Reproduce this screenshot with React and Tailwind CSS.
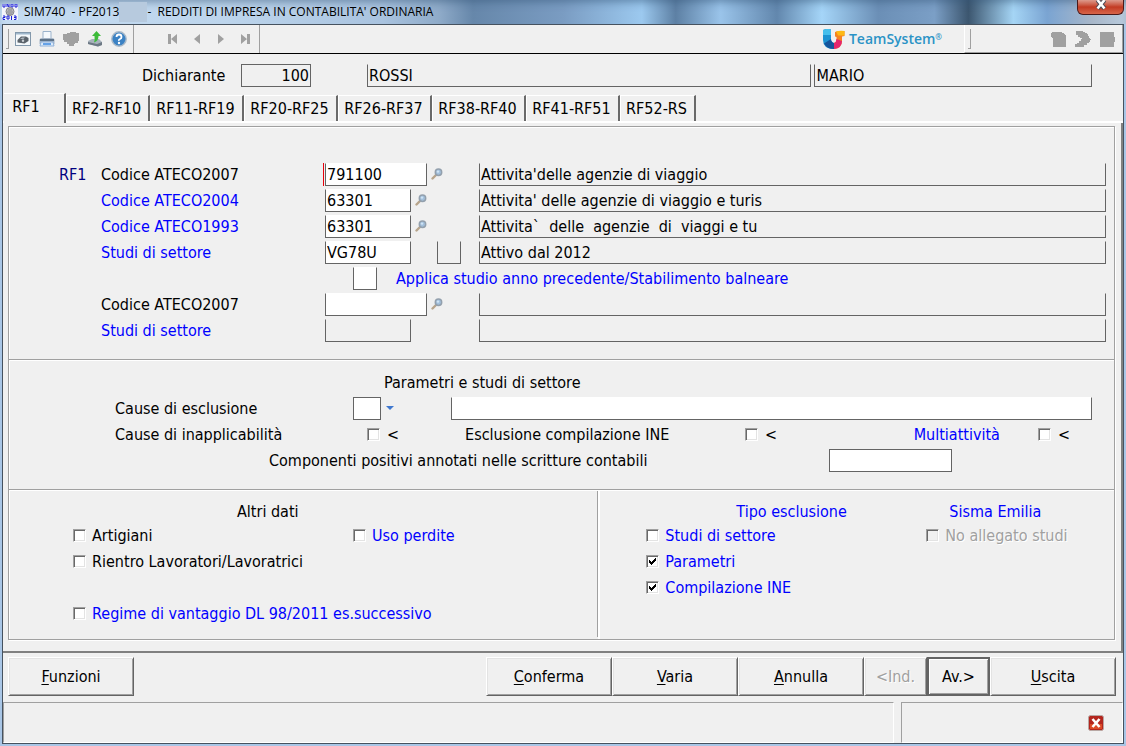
import { useState } from 'react';
import clsx from 'clsx';

const tabs = [
  { label: 'RF1', width: 'w-[62px]' },
  { label: 'RF2-RF10', width: 'w-[84px]' },
  { label: 'RF11-RF19', width: 'w-[94px]' },
  { label: 'RF20-RF25', width: 'w-[94px]' },
  { label: 'RF26-RF37', width: 'w-[94px]' },
  { label: 'RF38-RF40', width: 'w-[94px]' },
  { label: 'RF41-RF51', width: 'w-[94px]' },
  { label: 'RF52-RS', width: 'w-[76px]' },
];

const activityRows = [
  { id: 'ateco2007', label: 'Codice ATECO2007', code: '791100', wide: true, lookup: true, required: true, text: "Attivita'delle agenzie di viaggio" },
  { id: 'ateco2004', label: 'Codice ATECO2004', blue: true, code: '63301', lookup: true, text: "Attivita' delle agenzie di viaggio e turis" },
  { id: 'ateco1993', label: 'Codice ATECO1993', blue: true, code: '63301', lookup: true, text: 'Attivita`  delle  agenzie  di  viaggi e tu' },
  { id: 'studi', label: 'Studi di settore', blue: true, code: 'VG78U', extra: true, text: 'Attivo dal 2012' },
];

const secondActivityRows = [
  { id: 'ateco2007b', label: 'Codice ATECO2007', code: '', wide: true, lookup: true, text: '' },
  { id: 'studib', label: 'Studi di settore', blue: true, code: '', locked: true, text: '' },
];

const Field = ({ className, locked, boxed, ...props }) => (
  <input
    type="text"
    className={clsx(
      'h-[23px] min-w-0 border border-[#646464] px-px text-base leading-5 text-black outline-none',
      !boxed && 'border-t-transparent',
      locked ? 'bg-[#f0f0f0]' : 'bg-white',
      className
    )}
    readOnly={locked}
    {...props}
  />
);

const CheckBox = ({ disabled, ...props }) => (
  <span className="relative block h-[13px] w-[13px] shrink-0">
    <input
      type="checkbox"
      disabled={disabled}
      className={clsx(
        'peer block h-[13px] w-[13px] appearance-none border border-t-[#a0a0a0] border-r-white border-b-white border-l-[#a0a0a0] shadow-[inset_1px_1px_0_#696969,inset_-1px_-1px_0_#e3e3e3]',
        disabled ? 'bg-[#f0f0f0]' : 'bg-white'
      )}
      {...props}
    />
    <svg
      viewBox="0 0 13 13"
      className="pointer-events-none absolute inset-0 hidden peer-checked:block"
      shapeRendering="crispEdges"
      aria-hidden="true"
    >
      <path d="M3 5h1v1h1v1h1v-1h1v-1h1v-1h1v-1h1v3h-1v1h-1v1h-1v1h-1v1h-1v-1h-1v-1h-1z" fill="#000" />
    </svg>
  </span>
);

const LabeledCheck = ({ label, blue, disabled, className, ...props }) => (
  <label
    className={clsx(
      'flex h-[26px] items-center gap-1.5 whitespace-nowrap',
      blue && 'text-[#0000ff]',
      disabled && 'text-[#a0a0a0] [text-shadow:1px_1px_0_#fff]',
      className
    )}
  >
    <CheckBox disabled={disabled} {...props} />
    {label}
  </label>
);

const LookupButton = () => (
  <button type="button" className="ml-0.5 flex h-4 w-4 items-center justify-center" aria-label="Cerca">
    <svg viewBox="0 0 12 12" className="h-3 w-3" aria-hidden="true">
      <path d="M1.500 10.500l3.500-3.500" stroke="#b8a58c" strokeWidth="2.400" strokeLinecap="round" />
      <circle cx="7.500" cy="4.300" r="3.200" fill="#a3c0dc" stroke="#93a0ad" strokeWidth="1.500" />
      <circle cx="7" cy="3.600" r="1.200" fill="#cfe4f5" />
    </svg>
  </button>
);

const ActivityRow = ({ row, section }) => (
  <div className="flex h-[26px] items-center">
    <span className="w-[42px] shrink-0 text-[#000080]">{section}</span>
    <label htmlFor={row.id} className={clsx('w-[222px] shrink-0 whitespace-nowrap', row.blue && 'text-[#0000ff]')}>
      {row.label}
    </label>
    <div className={clsx('flex w-[156px] shrink-0 items-center border-l pl-px', row.required ? 'border-red-600' : 'border-transparent')}>
      <Field id={row.id} defaultValue={row.code} locked={row.locked} className={row.wide ? 'w-[102px]' : 'w-[86px]'} />
      {row.lookup ? <LookupButton /> : null}
      {row.extra ? <Field locked aria-label="Tipo studio" className="mr-[18px] ml-auto w-6" /> : null}
    </div>
    <Field locked defaultValue={row.text} aria-label={`Descrizione ${row.label}`} className="flex-1" />
  </div>
);

const InlineCheck = ({ id, ...props }) => (
  <div className="flex items-center gap-[7px]">
    <CheckBox id={id} {...props} />
    <span>&lt;</span>
  </div>
);

const ActionButton = ({ children, hotkey, className, focused, ...props }) => (
  <button
    type="button"
    className={clsx(
      'h-[39px] border text-base',
      focused
        ? 'border-2 border-[#646464] shadow-[inset_1px_1px_0_#fff,inset_-1px_-1px_0_#a0a0a0]'
        : 'border-t-white border-r-[#646464] border-b-[#646464] border-l-white shadow-[inset_1px_1px_0_#e3e3e3,inset_-1px_-1px_0_#a0a0a0]',
      'disabled:text-[#a0a0a0] disabled:[text-shadow:1px_1px_0_#fff]',
      className
    )}
    {...props}
  >
    {hotkey ? <span className="underline underline-offset-2">{hotkey}</span> : null}
    {children}
  </button>
);

const ToolButton = ({ label, children }) => (
  <button type="button" className="flex h-6 w-6 items-center justify-center" aria-label={label}>
    <svg viewBox="0 0 16 16" className="h-4 w-4" aria-hidden="true">
      {children}
    </svg>
  </button>
);

const TitleBar = () => (
  <header className="flex h-6 items-center bg-[linear-gradient(90deg,#c5dcf2_0%,#bdd5ec_20%,#a9c3df_34%,#8fabc9_39%,#6687aa_42%,#7a9cc2_50%,#9cc9ef_57%,#5d80a4_60%,#9ac4ea_64%,#6287ad_69%,#a5d5f8_73%,#6b8fb6_78%,#7b9fc6_83%,#3c566f_86%,#a5d5f5_90%,#7aa4d2_93%,#a8b7c9_97%,#b9cbdd_100%)] pl-[2px] shadow-[inset_0_6px_8px_-4px_#33557788]">
    <svg viewBox="0 0 16 16" className="h-4 w-4 shrink-0" aria-hidden="true">
      <rect width="16" height="16" fill="#f4f4fb" />
      <path d="M1 0v3h2V0M5 3V0l2 3V0M9 0v3h2V0zM13 0h2v3h-2z" stroke="#1a20d8" fill="none" />
      <circle cx="8" cy="7.500" r="4" fill="#b9b9bd" stroke="#85858c" />
      <path d="M6 6h4M5 8h6M6 10h4" stroke="#8b8b92" />
      <path d="M1 12h2v1.500H1V15.500h2M5 12h2v3H5zM9.500 12v4M12 12h2v3.500h-2M12 13.500h2" stroke="#1a20d8" fill="none" />
    </svg>
    <h1 className="flex flex-1 items-center pl-1.5 font-['Open_Sans',sans-serif] text-xs whitespace-pre text-black">
      SIM740&nbsp; - PF2013
      <span className="h-5 w-7 bg-[#b7cade]" />
      -&nbsp; REDDITI DI IMPRESA IN CONTABILITA' ORDINARIA
    </h1>
    <button
      type="button"
      className="mr-0.5 flex h-[15px] w-[47px] items-start justify-center self-start rounded-b-md border border-t-0 border-[#4b1a1a] bg-linear-to-b from-[#dc9a8c] via-[#c23a22] to-[#d7654a]"
      aria-label="Chiudi"
    >
      <svg viewBox="0 0 12 10" className="h-2.5 w-3" aria-hidden="true">
        <path d="M2.500 0l7 8.500M9.500 0l-7 8.500" stroke="#4a4a55" strokeWidth="4.400" />
        <path d="M2.500 0l7 8.500M9.500 0l-7 8.500" stroke="#fff" strokeWidth="2.600" />
      </svg>
    </button>
  </header>
);

const Grip = () => <span className="h-5 w-[3px] border-r border-b border-[#a0a0a0]" />;

const Brand = () => (
  <div className="flex items-center gap-1">
    <svg viewBox="0 0 22 20" className="h-5 w-[22px]" aria-hidden="true">
      <path d="M0 1q4-2 8-.5V10q0 3 3 4v6Q0 20 0 11z" fill="#1c93d2" />
      <path d="M0 1q4-2 8-.5V6H0z" fill="#45bfec" />
      <path d="M1 14.500L8 10q0 3 3 4v6q-7 0-10-5.500z" fill="#15559c" />
      <path d="M12 3q3-1 9.500-1v5l-2.500.5V12q0 7-8 8v-6q2.500-1 2.500-4V8L12 7.500z" fill="#f5821f" />
      <path d="M13 2.500q3-1 8.500-.5v4.500H15z" fill="#fdb913" />
      <path d="M13.500 10L19 12q0 7-8 8v-6q2.500-1 2.500-4z" fill="#e5266e" />
    </svg>
    <span className="font-['Open_Sans',sans-serif] text-sm font-semibold text-[#2b93c6]">
      TeamSystem<sup className="text-[8px]">®</sup>
    </span>
  </div>
);

const Toolbar = () => (
  <div className="flex h-[29px] items-stretch border-b border-black">
    <div className="flex items-center border-r border-[#a0a0a0] pl-[3px]">
      <Grip />
      <div className="flex h-full items-center border-r border-[#a0a0a0] pr-0.5 pl-0.5">
        <ToolButton label="Anteprima">
          <rect x="0.500" y="1.500" width="15" height="13" fill="#f4f8fb" stroke="#8398ab" />
          <path d="M1 2h14v1.500H1z" fill="#9fb7cb" />
          <path d="M2.500 9l3.500-3.500h5L13.500 7v3l-4 2.500-7-1z" fill="#5b636b" />
          <path d="M5 8l2-1.500h3L8.500 8z" fill="#aeb6bd" />
          <circle cx="8" cy="9.800" r="1.200" fill="#c9ced3" />
        </ToolButton>
        <ToolButton label="Stampa">
          <path d="M4 .5h8V8H4z" fill="#f5f9fd" stroke="#9bb3cc" />
          <path d="M.5 9q0-2 3-2h9q3 0 3 2v4H.5z" fill="#a4b4c6" />
          <path d="M1 8h14v2H1z" fill="#5e7389" />
          <path d="M2 11h12l1 4H1z" fill="#dcebfa" stroke="#8fb0d8" />
          <path d="M4 13h8" stroke="#3f8ae0" strokeWidth="1.500" />
        </ToolButton>
        <ToolButton label="Esporta">
          <path d="M0 3h4V2h3V1h6v1h3v8h-1v2h-3v1h-1v2H6v-2H4v-2H1V9H0z" fill="#a0a0a0" />
        </ToolButton>
        <ToolButton label="Scarica">
          <path d="M1 10l4-2h7l3 3v3l-4 1.500L1 13z" fill="#a8b2bc" />
          <path d="M1 11l9 2 5-2v3l-4 1.500L1 13z" fill="#6c7884" />
          <path d="M9.500 0L14 5h-2.500q0 5-4.500 6.500Q8 9 7.500 5H5z" fill="#3dbb3a" />
        </ToolButton>
        <ToolButton label="Aiuto">
          <circle cx="8" cy="8" r="7.200" fill="#3b82c4" stroke="#a9b9c8" strokeWidth="1.400" />
          <path d="M5.500 6q0-2.500 2.500-2.500T10.500 6q0 1.300-1.500 2T8 9.800" stroke="#fff" strokeWidth="1.800" fill="none" />
          <circle cx="8" cy="12" r="1.200" fill="#fff" />
        </ToolButton>
      </div>
      <div className="flex items-center pr-0.5 pl-[27px]">
        <ToolButton label="Primo">
          <path d="M3 3h3v10H3zM12 3v10L6 8z" fill="#a0a0a0" />
        </ToolButton>
        <ToolButton label="Precedente">
          <path d="M11 3v10L5 8z" fill="#a0a0a0" />
        </ToolButton>
        <ToolButton label="Successivo">
          <path d="M5 3v10l6-5z" fill="#a0a0a0" />
        </ToolButton>
        <ToolButton label="Ultimo">
          <path d="M10 3h3v10h-3zM4 3v10l6-5z" fill="#a0a0a0" />
        </ToolButton>
      </div>
    </div>
    <div className="mr-[22px] ml-auto flex items-center">
      <Brand />
    </div>
    <div className="flex items-center border-r border-b border-l border-r-[#a0a0a0] border-b-[#a0a0a0] border-l-white pr-[3px] pl-[3px]">
      <Grip />
      <div className="flex pl-[76px]">
        <ToolButton label="Documento">
          <path d="M1 1h10v1h2v1h1v1h1v12H2V7H1V6H0V2h1z" fill="#a0a0a0" />
        </ToolButton>
        <ToolButton label="Avanza">
          <path d="M1 0h7v1h2v1h2v1h1v2h1v2h1v1h1v1h-1v2h-1v1h-2v2H9v2H0v-3h2v-1h2v-2h2V8h1V7H5V6H3V4H1z" fill="#a0a0a0" />
        </ToolButton>
        <ToolButton label="Modulo">
          <path d="M1 1h14v5h1v5h-1v5H1z" fill="#a0a0a0" />
        </ToolButton>
      </div>
    </div>
  </div>
);

export default function App() {
  const [activeTab, setActiveTab] = useState('RF1');

  return (
    <div className="flex min-h-screen flex-col bg-[#a9c6e6] font-['DejaVu_Sans_Condensed','DejaVu_Sans',sans-serif] text-base leading-[21px] text-black">
      <TitleBar />
      <div className="mx-0.5 mb-0.5 flex flex-1 flex-col border border-[#46525f] bg-[#f0f0f0]">
        <Toolbar />

        <div className="flex h-[39px] items-center pt-1 pr-[31px] pl-[139px]">
          <label htmlFor="dichiarante" className="w-[99px] shrink-0">
            Dichiarante
          </label>
          <Field id="dichiarante" boxed locked defaultValue="100" className="w-[70px] text-right" />
          <Field locked defaultValue="ROSSI" aria-label="Cognome" className="ml-14 flex-[446]" />
          <Field locked defaultValue="MARIO" aria-label="Nome" className="ml-[3px] flex-[277]" />
        </div>

        <div role="tablist" className="flex items-end border-b-2 border-white pl-px">
          {tabs.map((tab) => (
            <button
              key={tab.label}
              type="button"
              role="tab"
              aria-selected={activeTab === tab.label}
              onClick={() => setActiveTab(tab.label)}
              className={clsx(
                'shrink-0 border-t border-r-2 border-t-white border-r-[#696969] text-base whitespace-nowrap',
                activeTab === tab.label ? '-mb-0.5 h-[30px] bg-[#f0f0f0] pr-4 pb-1' : 'h-[26px] border-l border-l-white pr-0.5',
                tab.width
              )}
            >
              {tab.label}
            </button>
          ))}
        </div>

        <main className="flex flex-1 flex-col border-r-2 border-b-2 border-[#808080] pt-[3px] pr-1.5 pb-[11px] pl-[5px]">
          <div className="flex flex-1 flex-col border border-[#a0a0a0] shadow-[inset_1px_1px_0_#fff,1px_1px_0_#fff]">
            <section className="border-b border-[#a0a0a0] pt-[34px] pr-2 pb-4 pl-[50px]">
              {activityRows.map((row, index) => (
                <ActivityRow key={row.id} row={row} section={index === 0 ? 'RF1' : ''} />
              ))}
              <div className="flex h-[26px] items-center gap-[19px] pl-[294px]">
                <Field id="applica" className="w-6" />
                <label htmlFor="applica" className="whitespace-nowrap text-[#0000ff]">
                  Applica studio anno precedente/Stabilimento balneare
                </label>
              </div>
              {secondActivityRows.map((row) => (
                <ActivityRow key={row.id} row={row} />
              ))}
            </section>

            <section className="border-t border-b border-t-white border-b-[#a0a0a0] pt-2 pr-[22px] pb-4 pl-[106px]">
              <h2 className="flex h-[26px] items-center pl-[269px]">Parametri e studi di settore</h2>
              <div className="flex h-[26px] items-center">
                <label htmlFor="esclusione" className="w-[238px] shrink-0">
                  Cause di esclusione
                </label>
                <Field id="esclusione" boxed className="w-7" />
                <button type="button" className="mr-[57px] flex h-5 w-[13px] items-center justify-end" aria-label="Apri elenco">
                  <svg viewBox="0 0 8 4" className="h-1 w-2" aria-hidden="true">
                    <path d="M0 0h8L4 4z" fill="#3f78cf" />
                  </svg>
                </button>
                <Field aria-label="Descrizione causa di esclusione" className="flex-1" />
              </div>
              <div className="flex h-[26px] items-center">
                <label htmlFor="inapplicabilita" className="w-[252px] shrink-0">
                  Cause di inapplicabilità
                </label>
                <InlineCheck id="inapplicabilita" />
                <label htmlFor="ine" className="ml-[66px] w-[280px]">
                  Esclusione compilazione INE
                </label>
                <InlineCheck id="ine" />
                <label htmlFor="multi" className="mr-[38px] ml-auto text-[#0000ff]">
                  Multiattività
                </label>
                <InlineCheck id="multi" />
                <span className="w-[22px]" />
              </div>
              <div className="flex h-[26px] items-center pl-[154px]">
                <label htmlFor="componenti" className="w-[560px]">
                  Componenti positivi annotati nelle scritture contabili
                </label>
                <Field id="componenti" boxed className="w-[123px]" />
              </div>
            </section>

            <div className="grid flex-1 grid-cols-[8fr_7fr] border-t border-white">
              <section className="mb-0.5 border-r border-[#a0a0a0] pt-2.5 pb-2.5 pl-16">
                <h2 className="flex h-[21px] items-center pl-[164px]">Altri dati</h2>
                <div className="grid grid-cols-[280px_1fr]">
                  <LabeledCheck label="Artigiani" />
                  <LabeledCheck label="Uso perdite" blue />
                  <LabeledCheck label="Rientro Lavoratori/Lavoratrici" />
                </div>
                <LabeledCheck label="Regime di vantaggio DL 98/2011 es.successivo" blue className="mt-[26px]" />
              </section>
              <section className="grid grid-cols-[280px_1fr] content-start border-l-2 border-white pt-2.5 pl-[46px]">
                <h2 className="flex h-[21px] items-center pl-[90px] text-[#0000ff]">Tipo esclusione</h2>
                <h2 className="flex h-[21px] items-center pl-[23px] text-[#0000ff]">Sisma Emilia</h2>
                <div>
                  <LabeledCheck label="Studi di settore" blue />
                  <LabeledCheck label="Parametri" blue defaultChecked />
                  <LabeledCheck label="Compilazione INE" blue defaultChecked />
                </div>
                <LabeledCheck label="No allegato studi" disabled />
              </section>
            </div>
          </div>
        </main>

        <div className="flex pt-1 pr-[7px] pb-1.5 pl-[5px]">
          <ActionButton hotkey="F" className="mr-auto w-[126px]">unzioni</ActionButton>
          <ActionButton hotkey="C" className="w-[126px]">onferma</ActionButton>
          <ActionButton hotkey="V" className="w-[126px]">aria</ActionButton>
          <ActionButton hotkey="A" className="w-[126px]">nnulla</ActionButton>
          <ActionButton disabled className="w-[63px]">&lt;Ind.</ActionButton>
          <ActionButton focused className="w-[63px]">Av.&gt;</ActionButton>
          <ActionButton hotkey="U" className="w-[126px]">scita</ActionButton>
        </div>

        <footer className="flex h-[41px] gap-[7px]">
          <div className="flex-1 border border-[#a0a0a0] border-r-white border-b-white" />
          <div className="flex w-[222px] items-center justify-end border border-[#a0a0a0] border-r-white border-b-white pr-[18px]">
            <button type="button" aria-label="Interrompi">
              <svg viewBox="0 0 16 16" className="h-4 w-4" aria-hidden="true">
                <rect x="0.500" y="0.500" width="15" height="15" rx="2" fill="#b3261e" stroke="#b8a8a4" />
                <path d="M2 9h12v5H2z" fill="#dc4a26" />
                <path d="M4.500 4l7 8M11.500 4l-7 8" stroke="#fff" strokeWidth="2.600" />
              </svg>
            </button>
          </div>
        </footer>
      </div>
    </div>
  );
}
